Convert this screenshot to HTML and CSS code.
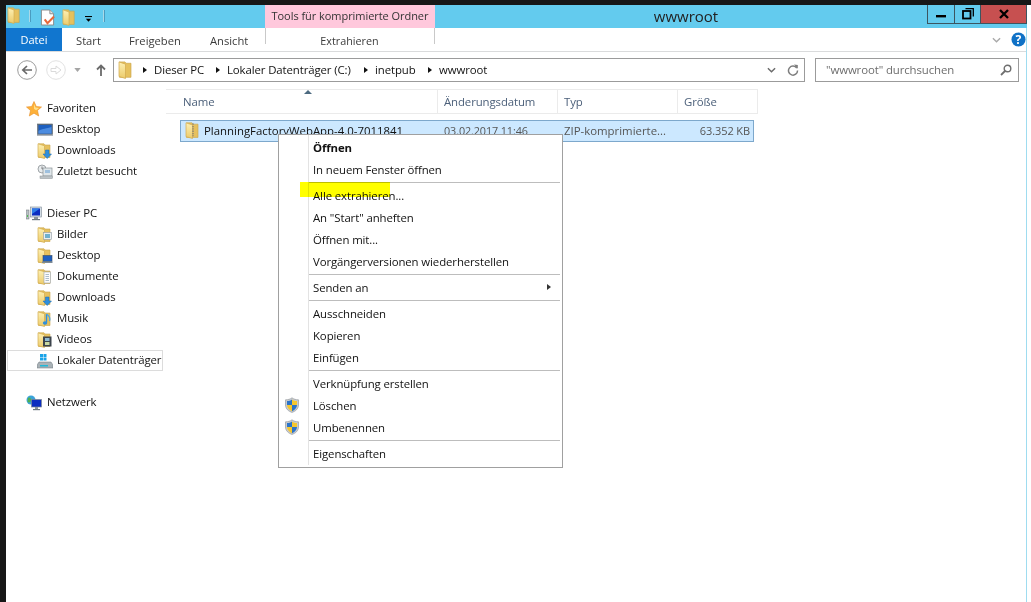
FILE: index.html
```html
<!DOCTYPE html>
<html lang="de">
<head>
<meta charset="utf-8">
<title>wwwroot</title>
<link rel="stylesheet" href="styles.css">
</head>
<body>
<svg class="sprite" aria-hidden="true">
  <defs>
    <linearGradient id="fg" x1="0" y1="0" x2="0" y2="1"><stop offset="0" stop-color="#fdf0b4"/><stop offset="1" stop-color="#eccb6a"/></linearGradient>
    <symbol id="folder" viewBox="0 0 16 16">
      <path d="M1.500 .8h5.500l1 1.200h5v12.500H1.500z" fill="#e6c15e" stroke="#c9a44a" stroke-width=".6"/>
      <path d="M1 .8l6.500 2v12.700L1 13.800z" fill="url(#fg)" stroke="#d2ac52" stroke-width=".7"/>
    </symbol>
    <symbol id="shield" viewBox="0 0 16 16">
      <path d="M8 .8C6.200 2.200 4 2.800 1.500 2.800V8c0 3.800 3 6.300 6.500 7.400 3.500-1.100 6.500-3.600 6.500-7.400V2.800C12 2.800 9.800 2.200 8 .8z" fill="#c9ccd0" stroke="#8b9096" stroke-width=".6"/>
      <path d="M8 2.500C6.500 3.500 5 4 3 4v4h5z" fill="#2c74c9"/>
      <path d="M8 2.500c1.500 1 3 1.500 5 1.500v4H8z" fill="#f6c72e"/>
      <path d="M3 8c0 3 2.500 5.200 5 6.300V8z" fill="#f6c72e"/>
      <path d="M13 8c0 3-2.500 5.200-5 6.300V8z" fill="#2c74c9"/>
    </symbol>
    <symbol id="dl" viewBox="0 0 16 16">
      <path d="M8.500 7h3.500v4h2.500l-4.300 4.500L6 11h2.500z" fill="#2f8fdc" stroke="#1a6cb5" stroke-width=".5"/>
    </symbol>
    <symbol id="monitor" viewBox="0 0 16 16">
      <rect x=".5" y="2" width="15" height="10.500" fill="#5f6f80" stroke="#56606b" stroke-width=".6"/>
      <rect x="1.500" y="3" width="13" height="8.500" fill="#1d5fc0"/>
      <path d="M1.500 9c4-3 8-2 13-4v6.500h-13z" fill="#4c8ce0"/>
      <rect x="0" y="12.500" width="16" height="1.200" fill="#8d98a3"/>
    </symbol>
    <symbol id="pc" viewBox="0 0 16 16">
      <rect x="0" y="4" width="3" height="9" fill="#b9c0c4" stroke="#6a7074" stroke-width=".5"/>
      <rect x="1" y="9" width="1" height="2" fill="#4fc04f"/>
      <rect x="4.500" y="1" width="11" height="10" fill="#d3dde6" stroke="#7f8a94" stroke-width=".6"/>
      <rect x="6" y="2.500" width="8" height="7" fill="#0c2dc0"/>
      <path d="M6 2.500h8L6 8z" fill="#2d7de8"/>
      <rect x="8" y="11" width="4" height="2" fill="#8a949c"/>
      <rect x="6" y="13" width="8" height="1.200" fill="#6e7880"/>
    </symbol>
  </defs>
</svg>

<div class="window">
  <header class="titlebar">
    <div class="qat">
      <svg class="ico-qat-folder" viewBox="0 0 16 16" preserveAspectRatio="none"><use href="#folder"/></svg>
      <span class="qat-sep"></span>
      <svg class="ico-qat-doc" viewBox="0 0 16 18">
        <path d="M1.500 1h9l4 4v12h-13z" fill="#fff" stroke="#8a8a8a"/>
        <path d="M10.500 1v4h4" fill="#e4e4e4" stroke="#8a8a8a"/>
        <path d="M5 11l3 4 7-7" fill="none" stroke="#e8683a" stroke-width="2.200"/>
      </svg>
      <svg class="ico-qat-folder2" viewBox="0 0 16 16" preserveAspectRatio="none"><use href="#folder"/></svg>
      <svg class="ico-qat-drop" viewBox="0 0 8 8"><rect x="0" y="0" width="8" height="1.200" fill="#000"/><path d="M1 3h6L4 6.500z" fill="#000"/></svg>
      <span class="qat-sep"></span>
    </div>
    <div class="ctx-title">Tools für komprimierte Ordner</div>
    <div class="win-title">wwwroot</div>
    <div class="win-buttons">
      <button class="wbtn wbtn-min" aria-label="Minimieren"><svg viewBox="0 0 12 10"><rect x="1" y="6" width="10" height="2.400" fill="#000"/></svg></button>
      <button class="wbtn wbtn-max" aria-label="Wiederherstellen"><svg viewBox="0 0 12 12"><path d="M3.500 .7h7.800v7.800" fill="none" stroke="#000" stroke-width="1.300"/><rect x="1" y="3" width="7.500" height="7.500" fill="none" stroke="#000" stroke-width="1.800"/></svg></button>
      <button class="wbtn wbtn-close" aria-label="Schließen"><svg viewBox="0 0 12 10"><path d="M2 1l8 8M10 1l-8 8" stroke="#000" stroke-width="2.300"/></svg></button>
    </div>
  </header>

  <nav class="ribbon">
    <div class="tab tab-file">Datei</div>
    <div class="tab tab-start">Start</div>
    <div class="tab tab-share">Freigeben</div>
    <div class="tab tab-view">Ansicht</div>
    <div class="tab tab-ctx">Extrahieren</div>
    <div class="ribbon-right">
      <svg class="ico-chev" viewBox="0 0 10 6"><path d="M1 1l4 4 4-4" fill="none" stroke="#a9a9a9" stroke-width="1.500"/></svg>
      <svg class="ico-help" viewBox="0 0 16 16"><circle cx="8" cy="8" r="7.500" fill="#0f71c6"/><text x="8" y="12.500" class="help-q">?</text></svg>
    </div>
  </nav>

  <div class="addressrow">
    <svg class="ico-back" viewBox="0 0 20 20"><circle cx="10" cy="10" r="9.300" fill="#fff" stroke="#8f8f8f" stroke-width=".9"/><path d="M15 10H6M10 6l-4.200 4 4.200 4" fill="none" stroke="#6a6a6a" stroke-width="1.700"/></svg>
    <svg class="ico-fwd" viewBox="0 0 20 20"><circle cx="10" cy="10" r="9.300" fill="#fff" stroke="#dedede" stroke-width=".9"/><path d="M5 8.500h5V6l5 4-5 4v-2.500H5z" fill="none" stroke="#dadada"/></svg>
    <svg class="ico-hist" viewBox="0 0 8 5"><path d="M0 0h8L4 5z" fill="#a5a5a5"/></svg>
    <svg class="ico-up" viewBox="0 0 10 12"><path d="M5 12V2M1 5.500L5 1.500l4 4" fill="none" stroke="#6b6b6b" stroke-width="1.800"/></svg>
    <div class="addressbox">
      <svg class="ico-addr-folder" viewBox="0 0 16 16" preserveAspectRatio="none"><use href="#folder"/></svg>
      <span class="crumb-arrow"></span><span class="crumb crumb-pc">Dieser PC</span>
      <span class="crumb-arrow"></span><span class="crumb crumb-disk">Lokaler Datenträger (C:)</span>
      <span class="crumb-arrow"></span><span class="crumb crumb-inet">inetpub</span>
      <span class="crumb-arrow"></span><span class="crumb">wwwroot</span>
      <svg class="ico-addr-chev" viewBox="0 0 10 6"><path d="M1 1l4 4 4-4" fill="none" stroke="#6b6b6b" stroke-width="1.600"/></svg>
      <svg class="ico-refresh" viewBox="0 0 12 12"><path d="M9.800 4.200A4.500 4.500 0 1 0 10.500 6.500" fill="none" stroke="#7d7d7d" stroke-width="1.500"/><path d="M7 .5L10.800 1v3.800z" fill="#7d7d7d"/></svg>
    </div>
    <div class="searchbox">
      <span>"wwwroot" durchsuchen</span>
      <svg class="ico-search" viewBox="0 0 12 12"><circle cx="7.500" cy="4.500" r="3.300" fill="none" stroke="#6f6f6f" stroke-width="1.400"/><path d="M5 7l-4 4" stroke="#6f6f6f" stroke-width="1.800"/></svg>
    </div>
  </div>

  <div class="body-row">
    <aside class="navpane">
      <div class="nav-group">
        <div class="nav-item top">
          <svg class="ico" viewBox="0 0 16 16"><path d="M8 .5l2.300 5 5.200.5-4 3.500 1.200 5.500L8 12.200 3.300 15l1.200-5.500-4-3.500 5.200-.5z" fill="#fdb13a" stroke="#e8912c" stroke-width=".6"/><path d="M8 3l1.500 3.500 3.500.4-2.800 2.300L8 8z" fill="#ffe08a"/></svg>
          <span>Favoriten</span>
        </div>
        <div class="nav-item"><svg class="ico" viewBox="0 0 16 16"><use href="#monitor"/></svg><span>Desktop</span></div>
        <div class="nav-item"><svg class="ico" viewBox="0 0 16 16"><use href="#folder"/><use href="#dl"/></svg><span>Downloads</span></div>
        <div class="nav-item"><svg class="ico" viewBox="0 0 16 16"><circle cx="5" cy="5" r="4" fill="#e8ecee" stroke="#8b9296" stroke-width=".8"/><path d="M5 2.500V5h2" fill="none" stroke="#555" stroke-width=".7"/><rect x="6" y="4" width="9" height="8" fill="#dfe6ea" stroke="#8b9296" stroke-width=".7"/><rect x="8" y="6" width="5" height="3" fill="#9ec0de"/><rect x="3" y="12" width="12.500" height="2.500" fill="#bcc3c7" stroke="#8b9296" stroke-width=".5"/></svg><span>Zuletzt besucht</span></div>
      </div>
      <div class="nav-group">
        <div class="nav-item top"><svg class="ico" viewBox="0 0 16 16"><use href="#pc"/></svg><span>Dieser PC</span></div>
        <div class="nav-item"><svg class="ico" viewBox="0 0 16 16"><use href="#folder"/><rect x="6.500" y="5.500" width="8" height="7" fill="#e9eef0" stroke="#8f9aa0" stroke-width=".6"/><rect x="8" y="7" width="5" height="4" fill="#6fb0cf"/></svg><span>Bilder</span></div>
        <div class="nav-item"><svg class="ico" viewBox="0 0 16 16"><use href="#folder"/><rect x="6" y="7.500" width="9" height="6" fill="#1d5fc0" stroke="#3a4c60" stroke-width=".6"/><rect x="5" y="13.500" width="10.500" height="1.500" fill="#7e8b97"/></svg><span>Desktop</span></div>
        <div class="nav-item"><svg class="ico" viewBox="0 0 16 16"><use href="#folder"/><rect x="7" y="3" width="6.500" height="11" fill="#fbfbfb" stroke="#9aa0a4" stroke-width=".6"/><path d="M8.500 5.500H12M8.500 7.500H12M8.500 9.500H12M8.500 11.500H12" stroke="#8aa3b8" stroke-width=".7"/></svg><span>Dokumente</span></div>
        <div class="nav-item"><svg class="ico" viewBox="0 0 16 16"><use href="#folder"/><use href="#dl"/></svg><span>Downloads</span></div>
        <div class="nav-item"><svg class="ico" viewBox="0 0 16 16"><use href="#folder"/><path d="M9.500 3v8.500" stroke="#2f8fdc" stroke-width="1.400"/><path d="M9.500 3c2 1.500 4.500 3 3 7" fill="none" stroke="#4ea6e6" stroke-width="1.300"/><ellipse cx="8" cy="12" rx="2.200" ry="1.700" fill="#2f8fdc"/></svg><span>Musik</span></div>
        <div class="nav-item"><svg class="ico" viewBox="0 0 16 16"><use href="#folder"/><rect x="6" y="4.500" width="8.500" height="10" fill="#3c444c"/><rect x="8" y="6" width="4.500" height="3" fill="#8db8d0"/><rect x="8" y="10" width="4.500" height="3" fill="#c9d8a0"/></svg><span>Videos</span></div>
        <div class="nav-item selected"><svg class="ico" viewBox="0 0 16 16"><rect x="3" y="1" width="3" height="3" fill="#1aa3e8"/><rect x="6.500" y="1" width="3" height="3" fill="#1aa3e8"/><rect x="3" y="4.500" width="3" height="3" fill="#1aa3e8"/><rect x="6.500" y="4.500" width="3" height="3" fill="#1aa3e8"/><path d="M2 9h12l2 3v3H0v-3z" fill="#a9b2b7" stroke="#6f777c" stroke-width=".5"/><rect x="3" y="12" width="8" height="1.500" fill="#22b8d8"/></svg><span>Lokaler Datenträger</span></div>
      </div>
      <div class="nav-group">
        <div class="nav-item top"><svg class="ico" viewBox="0 0 16 16"><circle cx="5" cy="5" r="4.500" fill="#3aa3d8"/><path d="M2 3c2-1 3 0 3 2S3 8 1.500 7z" fill="#4fb04f"/><rect x="5.500" y="4.500" width="10" height="7.500" fill="#0c2dc0" stroke="#7f8a94" stroke-width=".7"/><rect x="9" y="12" width="3" height="2" fill="#8a949c"/><rect x="7" y="14" width="7" height="1.200" fill="#6e7880"/></svg><span>Netzwerk</span></div>
      </div>
    </aside>

    <main class="files">
      <div class="colhead">
        <div class="col col-name">Name</div>
        <div class="col col-date">Änderungsdatum</div>
        <div class="col col-type">Typ</div>
        <div class="col col-size">Größe</div>
      </div>
      <div class="filerow">
        <div class="cell-name">
          <svg class="ico" viewBox="0 0 16 16" preserveAspectRatio="none"><use href="#folder"/><path d="M8 1.500v12" stroke="#9a8f70" stroke-width="1.800" stroke-dasharray="1.200 1"/></svg>
          <span>PlanningFactoryWebApp-4.0-7011841</span>
        </div>
        <div class="cell-date">03.02.2017 11:46</div>
        <div class="cell-type">ZIP-komprimierte...</div>
        <div class="cell-size">63.352 KB</div>
      </div>
    </main>
  </div>
</div>

<div class="sort-arrow"></div>

<div class="menu">
  <div class="mi strong">Öffnen</div>
  <div class="mi">In neuem Fenster öffnen</div>
  <div class="msep"></div>
  <div class="mi">Alle extrahieren...</div>
  <div class="mi">An "Start" anheften</div>
  <div class="mi">Öffnen mit...</div>
  <div class="mi">Vorgängerversionen wiederherstellen</div>
  <div class="msep"></div>
  <div class="mi">Senden an<span class="sub-arrow"></span></div>
  <div class="msep"></div>
  <div class="mi">Ausschneiden</div>
  <div class="mi">Kopieren</div>
  <div class="mi">Einfügen</div>
  <div class="msep"></div>
  <div class="mi">Verknüpfung erstellen</div>
  <div class="mi"><svg class="mi-ico" viewBox="0 0 16 16"><use href="#shield"/></svg>Löschen</div>
  <div class="mi"><svg class="mi-ico" viewBox="0 0 16 16"><use href="#shield"/></svg>Umbenennen</div>
  <div class="msep"></div>
  <div class="mi">Eigenschaften</div>
</div>

<div class="highlight"></div>
</body>
</html>
```

FILE: styles.css
```css
* { box-sizing: border-box; }
html, body { margin: 0; height: 100%; }
body {
  width: 1031px;
  height: 602px;
  overflow: hidden;
  background: #fff;
  border-top: 5px solid #171717;
  font-family: "Open Sans", "Noto Sans", sans-serif;
  font-size: 11.4px;
  letter-spacing: -.1px;
  color: #111;
}
body::before {
  content: "";
  position: absolute;
  left: 0;
  top: 5px;
  bottom: 0;
  width: 6px;
  background: #171717;
}
.sprite { position: absolute; width: 0; height: 0; }

.window {
  margin-left: 6px;
  width: 1021px;
  height: 597px;
  border-right: 1px solid #9fdcf0;
  display: flex;
  flex-direction: column;
}

/* title bar */
.titlebar {
  height: 23px;
  flex: none;
  margin-right: -1px;
  background: #63cbee;
  display: flex;
  position: relative;
}
.qat { width: 259px; display: flex; align-items: flex-start; flex: none; }
.qat svg { display: block; flex: none; }
.ico-qat-folder { width: 15px; height: 17px; margin-top: 2px; margin-left: 1px; }
.qat-sep { width: 1px; height: 12px; background: #a9d9e8; box-shadow: 1px 0 0 #4a9cc0; margin-top: 5px; flex: none; }
.qat-sep:nth-of-type(1) { margin-left: 7px; }
.ico-qat-doc { width: 15px; height: 17px; margin: 4px 0 0 10px; }
.ico-qat-folder2 { width: 15px; height: 17px; margin: 4px 0 0 7px; }
.ico-qat-drop { width: 7px; height: 7px; margin: 11px 0 0 8px; }
.qat-sep:last-child { margin-left: 11px; }
.ctx-title {
  width: 170px;
  flex: none;
  background: #ffc8dc;
  color: #333;
  text-align: center;
  line-height: 21px;
  font-size: 11px;
  letter-spacing: -.05px;
  white-space: nowrap;
}
.win-title {
  width: 314px;
  flex: none;
  text-align: center;
  padding-left: 188px;
  font-size: 15px;
  letter-spacing: 0;
  line-height: 23px;
  color: #222;
}
.win-buttons {
  position: absolute;
  top: 0;
  right: 0;
  display: flex;
  height: 19px;
}
.wbtn {
  padding: 0;
  height: 19px;
  border: 1px solid #3c5560;
  border-top: 0;
  background: #63cbee;
  display: flex;
  align-items: center;
  justify-content: center;
}
.wbtn + .wbtn { border-left: 0; }
.wbtn-min { width: 28px; }
.wbtn-max { width: 26px; }
.wbtn-close { width: 46px; background: #c75050; }
.wbtn svg { width: 12px; height: 10px; display: block; }
.wbtn-max svg { height: 12px; width: 12px; }

/* ribbon */
.ribbon {
  height: 24px;
  flex: none;
  display: flex;
  border-bottom: 1px solid #dadbdc;
  position: relative;
  font-size: 11.2px;
  letter-spacing: 0;
  color: #3b3b3b;
}
.tab { line-height: 26px; white-space: nowrap; flex: none; }
.tab-file { width: 56px; height: 23px; background: #1176cf; color: #fff; text-align: center; font-size: 11px; line-height: 24px; }
.tab-start { width: 67px; padding-left: 14px; }
.tab-share { width: 81px; }
.tab-view { width: 55px; }
.tab-ctx {
  width: 170px;
  height: 16px;
  border-left: 1px solid #c9c9c9;
  border-right: 1px solid #c9c9c9;
  line-height: 26px;
  text-align: center;
  overflow: visible;
  padding-right: 1px;
  font-size: 10.8px;
}
.ribbon-right { margin-left: auto; display: flex; align-items: center; }
.ico-chev { width: 9px; height: 6px; margin-right: 10px; }
.ico-help { width: 15px; height: 15px; }
.help-q { font-size: 13px; font-weight: 700; fill: #fff; text-anchor: middle; font-family: "Open Sans", sans-serif; }

/* address row */
.addressrow {
  height: 37px;
  flex: none;
  display: flex;
  align-items: center;
  padding-bottom: 2px;
}
.ico-back, .ico-fwd { width: 20px; height: 20px; flex: none; }
.ico-back { margin-left: 11px; }
.ico-fwd { margin-left: 9px; }
.ico-hist { width: 7px; height: 4px; margin-left: 8px; flex: none; }
.ico-up { width: 10px; height: 12px; margin-left: 15px; flex: none; }
.addressbox, .searchbox {
  height: 24px;
  border: 1px solid #9b9b9b;
  display: flex;
  align-items: center;
  flex: none;
  white-space: nowrap;
}
.addressbox { width: 692px; margin-left: 7px; padding-left: 4px; }
.ico-addr-folder { width: 16px; height: 18px; flex: none; }
.crumb-arrow {
  width: 0; height: 0;
  border-left: 4px solid #111;
  border-top: 3.500px solid transparent;
  border-bottom: 3.500px solid transparent;
  margin: 0 7px 0 9px;
  flex: none;
}
.crumb-pc { width: 53px; }
.crumb-disk { width: 128px; }
.crumb-inet { width: 44px; }
.ico-addr-chev { width: 9px; height: 6px; margin-left: auto; flex: none; }
.ico-refresh { width: 12px; height: 12px; margin: 0 5px 0 11px; flex: none; }
.searchbox {
  width: 204px;
  margin-left: 10px;
  padding: 0 6px 0 10px;
  color: #6d6d6d;
  justify-content: space-between;
}
.ico-search { width: 12px; height: 12px; flex: none; }

/* content */
.body-row { flex: 1; display: flex; min-height: 0; }
.navpane { width: 160px; flex: none; padding-top: 9px; }
.nav-group + .nav-group { margin-top: 21px; }
.nav-item {
  height: 21px;
  display: flex;
  align-items: center;
  padding-left: 30px;
  white-space: nowrap;
  border: 1px solid transparent;
}
.nav-item span { padding-bottom: 2px; }
.nav-item.top { padding-left: 19px; }
.nav-item .ico { width: 16px; height: 16px; flex: none; margin-right: 4px; }
.nav-item.top .ico { margin-right: 5px; }
.nav-item.selected { border-color: #dcdcdc; margin-left: 1px; padding-left: 29px; width: 156px; }

.files { flex: 1; min-width: 0; }
.colhead {
  width: 592px;
  height: 25px;
  display: flex;
  border-top: 1px solid #ebebeb;
  border-bottom: 1px solid #ebebeb;
  color: #4c607a;
}
.col { line-height: 23px; padding-left: 6px; border-right: 1px solid #ebebeb; flex: none; }
.col-name { width: 272px; padding-left: 17px; }
.col-date { width: 120px; }
.col-type { width: 120px; }
.col-size { width: 80px; }
.filerow {
  width: 574px;
  height: 22px;
  margin: 6px 0 0 14px;
  padding-bottom: 2px;
  background: #cce8ff;
  border: 1px solid #7da8cc;
  display: flex;
  align-items: center;
  white-space: nowrap;
  color: #555;
}
.cell-name { width: 257px; flex: none; display: flex; align-items: center; padding-left: 4px; color: #111; letter-spacing: 0; }
.cell-name .ico { width: 16px; height: 17px; margin-right: 3px; flex: none; }
.cell-date { width: 120px; flex: none; padding-left: 6px; font-size: 10.8px; }
.cell-type { width: 120px; flex: none; padding-left: 6px; letter-spacing: 0; }
.cell-size { flex: 1; text-align: right; padding-right: 3px; font-size: 11px; }

/* overlays */
.sort-arrow {
  position: absolute;
  left: 304px;
  top: 90px;
  width: 0; height: 0;
  border-left: 4px solid transparent;
  border-right: 4px solid transparent;
  border-bottom: 4px solid #4c6a80;
}
.menu {
  position: absolute;
  left: 278px;
  top: 134px;
  width: 285px;
  height: 334px;
  padding: 1px 2px 3px 1px;
  background: #fff;
  border: 1px solid #a0a0a0;
}
.menu::before {
  content: "";
  position: absolute;
  left: 29px;
  top: 0;
  bottom: 2px;
  width: 1px;
  background: #e3e3e3;
}
.mi {
  height: 22px;
  line-height: 24px;
  padding-left: 33px;
  position: relative;
  white-space: nowrap;
  color: #111;
}
.mi.strong { font-weight: 700; }
.msep { height: 4px; margin-left: 29px; padding-top: 1px; }
.msep::before { content: ""; display: block; height: 1px; margin-top: 1px; background: #bdbdbd; }
.mi-ico { position: absolute; left: 4px; top: 3px; width: 16px; height: 16px; }
.sub-arrow {
  position: absolute;
  right: 9px;
  top: 8px;
  width: 0; height: 0;
  border-left: 4px solid #333;
  border-top: 3.500px solid transparent;
  border-bottom: 3.500px solid transparent;
}
.highlight {
  position: absolute;
  left: 300px;
  top: 182px;
  width: 90px;
  height: 15px;
  background: #ffff00;
  mix-blend-mode: multiply;
}
```
